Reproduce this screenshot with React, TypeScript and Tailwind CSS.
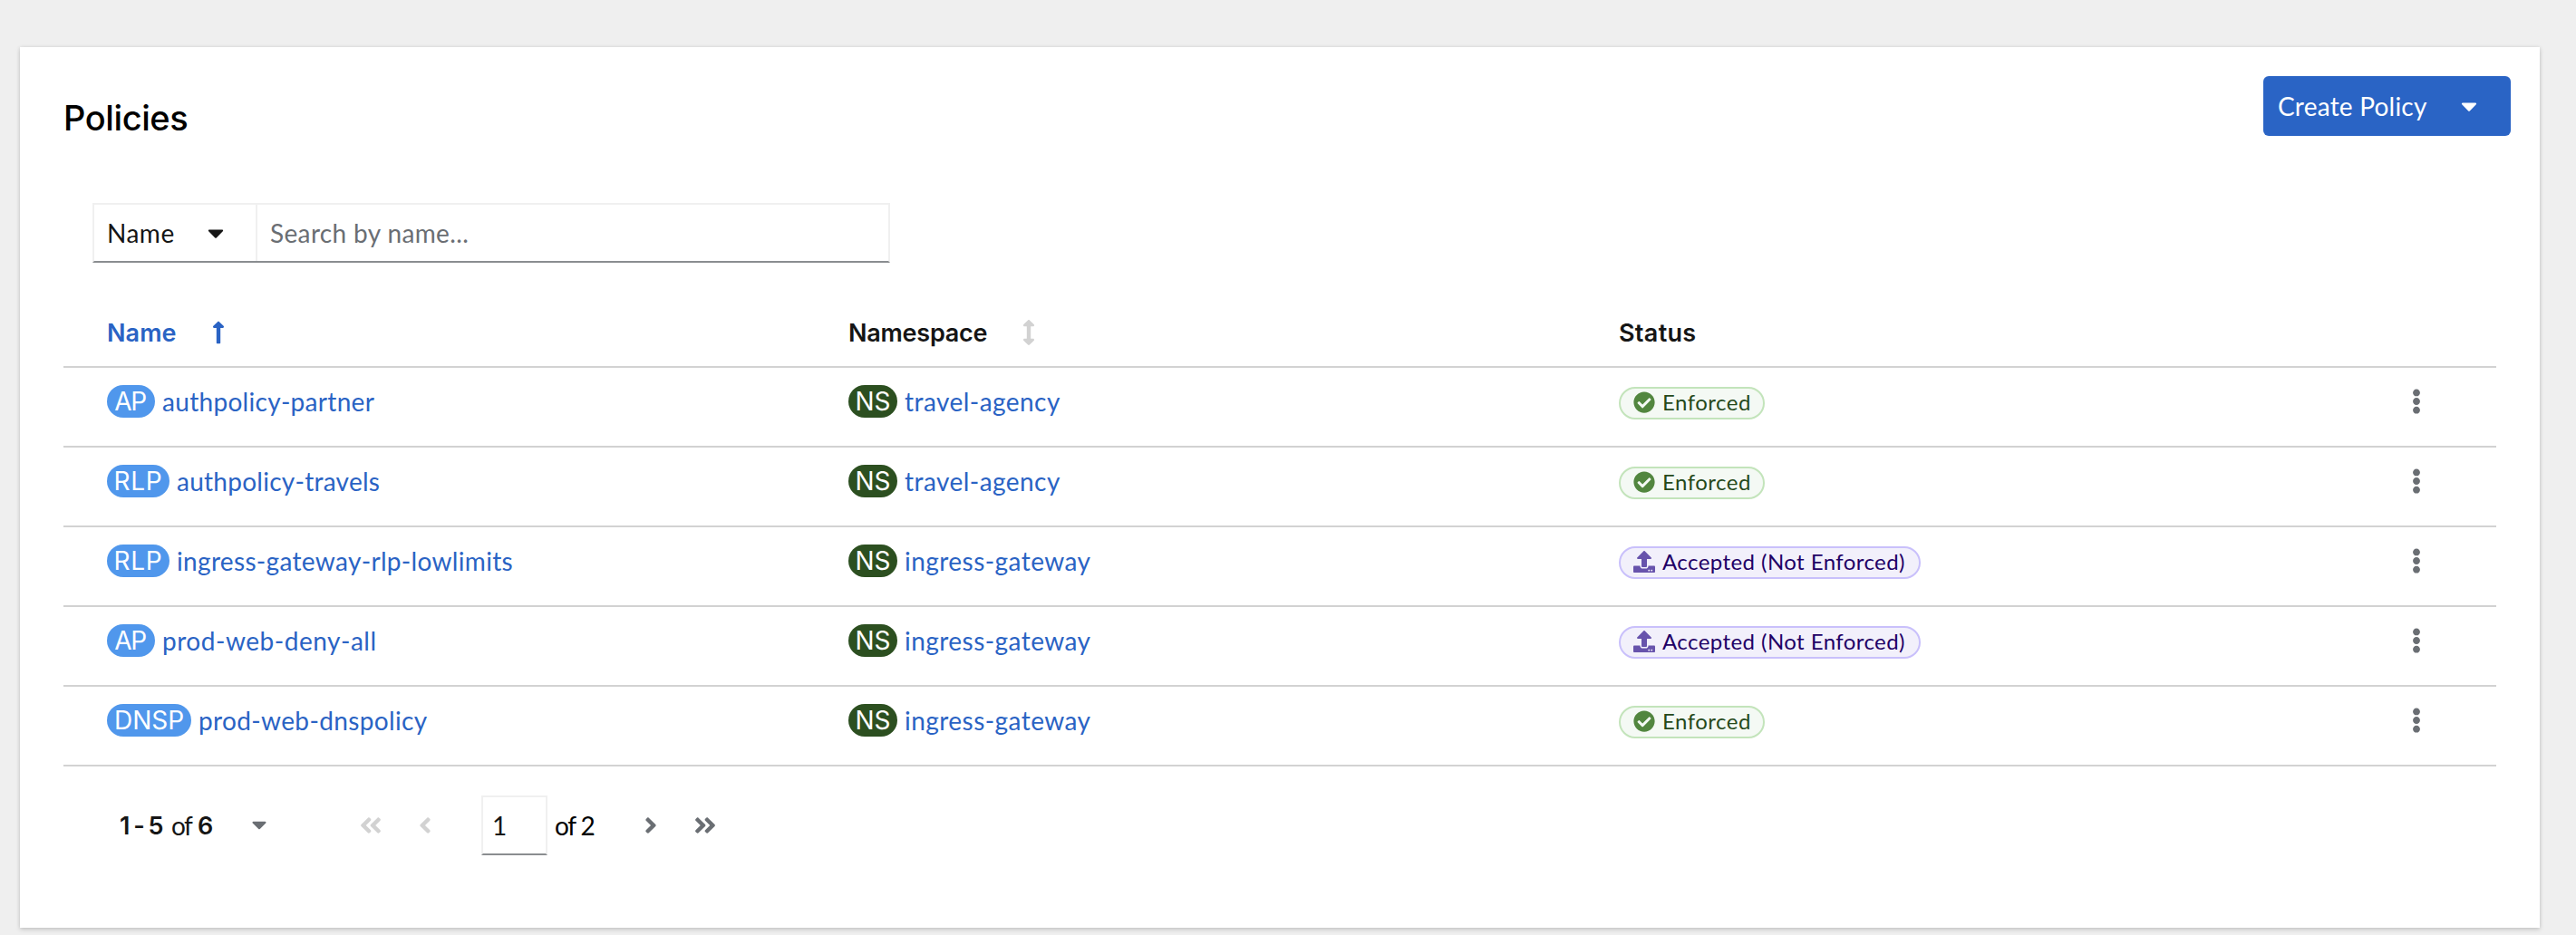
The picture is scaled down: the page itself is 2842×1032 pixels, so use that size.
import React from 'react';
import {
  FaAngleDoubleLeft,
  FaAngleDoubleRight,
  FaAngleLeft,
  FaAngleRight,
  FaArrowsAltV,
  FaCaretDown,
  FaCheckCircle,
  FaEllipsisV,
  FaLongArrowAltUp,
  FaUpload,
} from 'react-icons/fa';

type Policy = {
  kind: 'AP' | 'RLP' | 'DNSP';
  name: string;
  nameTracking: string;
  namespace: string;
  enforced: boolean;
};

const POLICIES: Policy[] = [
  { kind: 'AP', name: 'authpolicy-partner', nameTracking: 'tracking-[0.3px]', namespace: 'travel-agency', enforced: true },
  { kind: 'RLP', name: 'authpolicy-travels', nameTracking: 'tracking-[0.26px]', namespace: 'travel-agency', enforced: true },
  { kind: 'RLP', name: 'ingress-gateway-rlp-lowlimits', nameTracking: 'tracking-[0.33px]', namespace: 'ingress-gateway', enforced: false },
  { kind: 'AP', name: 'prod-web-deny-all', nameTracking: 'tracking-[0.53px]', namespace: 'ingress-gateway', enforced: false },
  { kind: 'DNSP', name: 'prod-web-dnspolicy', nameTracking: 'tracking-[0.36px]', namespace: 'ingress-gateway', enforced: true },
];

const BADGE_STYLES = {
  AP: 'w-[53px] bg-[#5097ec] pr-0.5 tracking-[-1.3px]',
  RLP: 'w-[69px] bg-[#5097ec] tracking-[0.8px]',
  DNSP: 'w-[93px] bg-[#5097ec]',
  NS: 'w-[54px] bg-[#2c4f20]',
};

function Badge({ kind }: { kind: keyof typeof BADGE_STYLES }) {
  return (
    <span
      className={`mt-px flex h-9 shrink-0 justify-center rounded-full font-['Inter',sans-serif] leading-9 text-white ${BADGE_STYLES[kind]}`}
    >
      {kind}
    </span>
  );
}

function ResourceLink({ kind, label, tracking }: { kind: keyof typeof BADGE_STYLES; label: string; tracking: string }) {
  return (
    <div className="flex items-start gap-2">
      <Badge kind={kind} />
      <a className={`leading-[38px] whitespace-nowrap text-[#2a63c4] ${tracking}`}>{label}</a>
    </div>
  );
}

function StatusLabel({ enforced }: { enforced: boolean }) {
  return enforced ? (
    <span className="mt-[3px] flex h-9 w-[161px] items-start rounded-full border-2 border-[#c3e4bb] bg-[#f4f9f4] pl-[14px] text-2xl leading-[30px] text-[#26491b]">
      <FaCheckCircle className="mt-[3px] size-6 text-[#52863f]" />
      <span className="ml-2 leading-[30px] tracking-[0.5px]">Enforced</span>
    </span>
  ) : (
    <span className="mt-[3px] flex h-9 w-[333px] items-start rounded-full border-2 border-[#c9c0fb] bg-[#f2f0fb] pl-[14px] text-2xl leading-[30px] text-[#1f0066]">
      <FaUpload className="mt-[3px] size-6 text-[#6753ac]" />
      <span className="ml-2 leading-[30px] whitespace-nowrap tracking-[0.43px]">Accepted (Not Enforced)</span>
    </span>
  );
}

const COLUMNS = 'grid grid-cols-[818px_850px_866px_28px] pl-12';

export default function App() {
  return (
    <div className="h-[1032px] w-[2842px] overflow-hidden bg-[#efefef] pt-[52px] pl-[22px] font-['Lato',sans-serif] text-[28px] text-[#151515]">
      <main className="h-[972px] w-[2780px] bg-white pr-8 pl-12 shadow-[0_2px_5px_rgba(3,3,3,0.16),0_0_4px_rgba(3,3,3,0.08)]">
        <header className="flex h-[172px] items-start justify-between pt-8">
          <h1 className="mt-[21px] font-['Inter',sans-serif] text-[38px] leading-[50px] font-medium tracking-[-0.4px] text-black">
            Policies
          </h1>
          <button className="flex h-[66px] w-[273px] items-center rounded-md bg-[#2a64c5] pl-4 text-white">
            <span className="tracking-[0.22px]">Create Policy</span>
            <FaCaretDown className="mb-px ml-8 size-7" />
          </button>
        </header>

        <div className="ml-8 flex h-[66px] w-[880px] border-2 border-[#f0f0f0] border-b-[#8a8d90]">
          <div className="flex w-[180px] items-center border-r-2 border-[#f0f0f0] pl-[14px]">
            <span className="w-[106px] tracking-[0.5px]">Name</span>
            <FaCaretDown className="size-7" />
          </div>
          <span className="flex items-center pl-[14px] tracking-[0.36px] text-[#6a6e73]">Search by name...</span>
        </div>

        <section className="mt-10 mr-4">
          <div
            className={`${COLUMNS} h-[76px] border-b-2 border-[#d2d2d2] pt-[18px] font-['Inter',sans-serif] text-[27px] leading-[39px] font-semibold`}
          >
            <div className="flex text-[#2a63c4]">
              <span className="w-[109px] tracking-[0.1px]">Name</span>
              <FaLongArrowAltUp className="mt-[5px] size-7" />
            </div>
            <div className="flex">
              <span className="w-[185px] tracking-[-0.24px]">Namespace</span>
              <FaArrowsAltV className="mt-[5px] size-7 text-[#d2d2d2]" />
            </div>
            <span className="tracking-[0.3px]">Status</span>
          </div>

          {POLICIES.map((p) => (
            <div key={p.name} className={`${COLUMNS} h-[88px] items-start border-b-2 border-[#d2d2d2] pt-[18px]`}>
              <ResourceLink kind={p.kind} label={p.name} tracking={p.nameTracking} />
              <ResourceLink kind="NS" label={p.namespace} tracking="tracking-[0.45px]" />
              <StatusLabel enforced={p.enforced} />
              <FaEllipsisV className="mt-[5px] size-7 text-[#6a6e73]" />
            </div>
          ))}
        </section>

        <nav className="mt-8 flex h-[66px] items-center pl-[62px]">
          <div className="flex h-9 w-[141px] pb-px leading-9">
            <b className="w-[57px] font-['Inter',sans-serif] text-[27px] leading-[38px] font-semibold whitespace-nowrap tracking-[-1.5px]">
              1 - 5
            </b>
            <span className="w-[29px] tracking-[-1.5px]">of</span>
            <b className="font-['Inter',sans-serif] text-[27px] leading-[38px] font-semibold">6</b>
          </div>
          <FaCaretDown className="mb-0.5 size-[26px] text-[#6a6e73]" />
          <FaAngleDoubleLeft className="ml-24 size-7 text-[#d2d2d2]" />
          <FaAngleLeft className="ml-8 size-7 text-[#d2d2d2]" />
          <span className="ml-12 flex h-[66px] w-[73px] items-center border-2 border-[#f0f0f0] border-b-[#8a8d90] pb-px pl-2.5">1</span>
          <span className="ml-2 w-[92px] pb-px whitespace-nowrap tracking-[-1.2px] text-black">of 2</span>
          <FaAngleRight className="size-7 text-[#6a6e73]" />
          <FaAngleDoubleRight className="ml-8 size-7 text-[#6a6e73]" />
        </nav>
      </main>
    </div>
  );
}
